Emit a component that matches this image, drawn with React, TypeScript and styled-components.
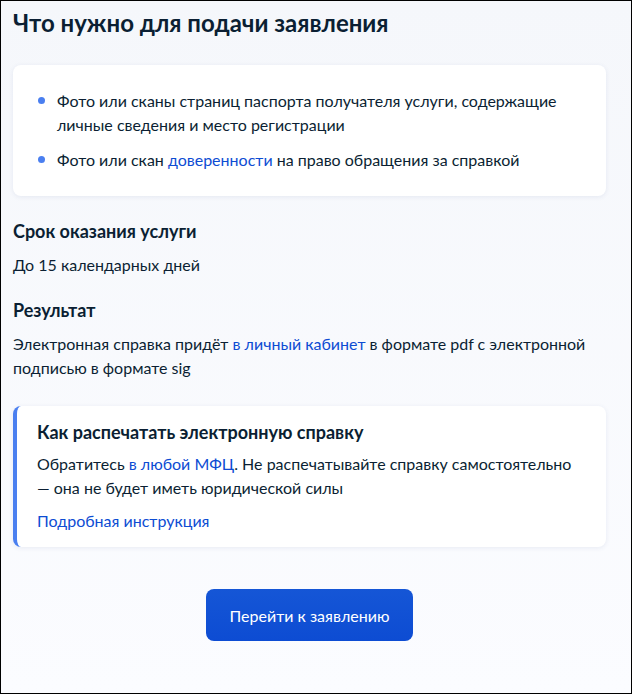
import { createGlobalStyle, styled } from "styled-components";

const GlobalStyle = createGlobalStyle`
  * {
    box-sizing: border-box;
  }
  body {
    margin: 0;
    font-family: Lato, "Noto Sans", sans-serif;
    color: #0b1f33;
  }
`;

const Page = styled.div`
  min-height: 100vh;
  border: 1px solid #000;
  background: linear-gradient(180deg, #f5f7fb 0%, #fbfcff 100%);
  padding: 6px 25px 40px 12px;
`;

const Title = styled.h1`
  margin: 0 0 26px;
  font-size: 24px;
  line-height: 32px;
  font-weight: 700;
`;

const Card = styled.div<{ $accent?: boolean }>`
  background: #fff;
  border-radius: 8px;
  box-shadow: 0 1px 5px rgba(40, 70, 130, 0.09);
  border-left: ${(p) => (p.$accent ? "4px solid #4a7ff0" : "none")};
  padding: ${(p) => (p.$accent ? "14px 20px 14px" : "24px 24px 24px 25px")};
`;

const List = styled.ul`
  list-style: none;
  margin: 0;
  padding: 0;
  display: flex;
  flex-direction: column;
  gap: 11px;
`;

const Item = styled.li`
  display: flex;
  align-items: flex-start;
  gap: 12px;
  font-size: 16px;
  line-height: 24px;
`;

const Dot = styled.span`
  flex: none;
  width: 7px;
  height: 7px;
  margin-top: 8px;
  border-radius: 50%;
  background: #4a7ff0;
`;

const Section = styled.section`
  margin-top: 23px;
  & + & {
    margin-top: 21px;
  }
`;

const Heading = styled.h2`
  margin: 0 0 10px;
  font-size: 18px;
  line-height: 24px;
  font-weight: 700;
`;

const Text = styled.p`
  margin: 0;
  font-size: 16px;
  line-height: 24px;
`;

const Link = styled.a`
  color: #0d4cd3;
  text-decoration: none;
`;

const MoreLink = styled(Link)`
  display: block;
  margin-top: 1px;
  font-size: 16px;
  line-height: 24px;
`;

const NoteCard = styled(Card)`
  margin-top: 26px;
  display: flex;
  flex-direction: column;
  gap: 8px;
`;

const NoteTitle = styled.h3`
  margin: 0;
  font-size: 18px;
  line-height: 24px;
  font-weight: 700;
`;

const Actions = styled.div`
  display: flex;
  justify-content: center;
  margin-top: 42px;
`;

const Button = styled.button`
  width: 207px;
  height: 52px;
  border: none;
  border-radius: 8px;
  background: linear-gradient(180deg, #1556d6 0%, #0d4cd3 100%);
  color: #fff;
  font-family: Lato, "Noto Sans", sans-serif;
  font-size: 16px;
  cursor: pointer;
`;

export default function App() {
  return (
    <>
      <GlobalStyle />
      <Page>
        <Title>Что нужно для подачи заявления</Title>
        <Card>
          <List>
            <Item>
              <Dot />
              <span>
                Фото или сканы страниц паспорта получателя услуги, содержащие
                личные сведения и место регистрации
              </span>
            </Item>
            <Item>
              <Dot />
              <span>
                Фото или скан <Link href="#">доверенности</Link> на право
                обращения за справкой
              </span>
            </Item>
          </List>
        </Card>

        <Section>
          <Heading>Срок оказания услуги</Heading>
          <Text>До 15 календарных дней</Text>
        </Section>
        <Section>
          <Heading>Результат</Heading>
          <Text>
            Электронная справка придёт <Link href="#">в личный кабинет</Link> в
            формате pdf с электронной подписью в формате sig
          </Text>
        </Section>

        <NoteCard $accent>
          <NoteTitle>Как распечатать электронную справку</NoteTitle>
          <Text>
            Обратитесь <Link href="#">в любой МФЦ</Link>. Не распечатывайте
            справку самостоятельно — она не будет иметь юридической силы
          </Text>
          <MoreLink href="#">Подробная инструкция</MoreLink>
        </NoteCard>

        <Actions>
          <Button>Перейти к заявлению</Button>
        </Actions>
      </Page>
    </>
  );
}
